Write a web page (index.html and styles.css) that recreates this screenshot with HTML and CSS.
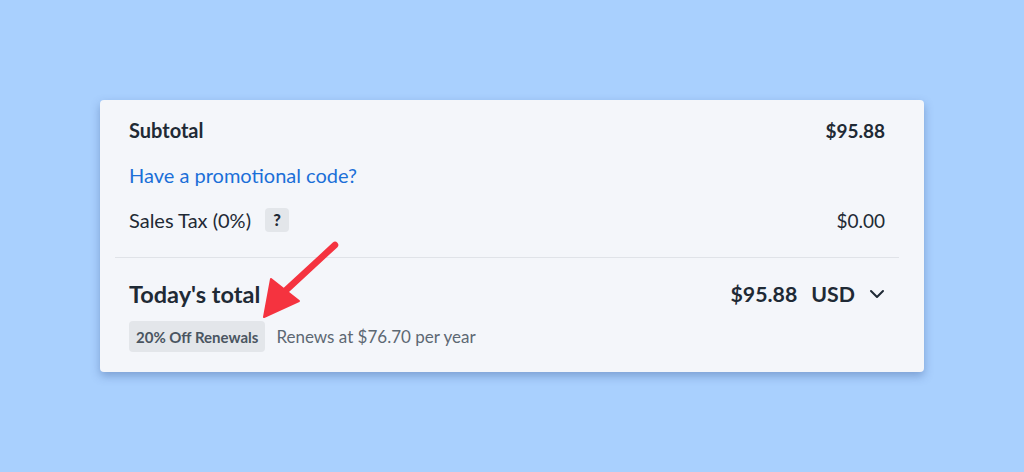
FILE: index.html
```html
<!DOCTYPE html>
<html lang="en">
  <head>
    <meta charset="UTF-8" />
    <meta name="viewport" content="width=device-width, initial-scale=1.0" />
    <link rel="stylesheet" href="styles.css">
  </head>
  <body>
    <div class="card">
      <div class="row">
        <span class="strong">Subtotal</span>
        <span class="strong amount">$95.88</span>
      </div>
      <div class="row">
        <a class="promo" href="#">Have a promotional code?</a>
      </div>
      <div class="row">
        <span class="tax">Sales Tax (0%) <span class="help">?</span></span>
        <span class="amount">$0.00</span>
      </div>

      <div class="divider"></div>

      <div class="row total-row">
        <span class="total">Today's total</span>
        <span class="total-right">
          <span class="total total-amount">$95.88</span>
          <span class="total total-amount">USD</span>
          <svg class="chev" width="16" height="10" viewBox="0 0 16 10">
            <path d="M2 2 L8 8 L14 2" fill="none" stroke="#1f2a35" stroke-width="2" stroke-linecap="round" stroke-linejoin="round"/>
          </svg>
        </span>
      </div>
      <div class="row renew-row">
        <span class="badge">20% Off Renewals</span>
        <span class="renew">Renews at $76.70 per year</span>
      </div>

      <svg class="arrow" width="90" height="90" viewBox="0 0 90 90">
        <path d="M82 8 L30 56" stroke="#f5333f" stroke-width="6.5" stroke-linecap="round"/>
        <polygon points="11,80 18,42 46,64" fill="#f5333f" stroke="#f5333f" stroke-width="2" stroke-linejoin="round"/>
      </svg>
    </div>
  </body>
</html>
```

FILE: styles.css
```css
body {
  margin: 0;
  height: 472px;
  background-color: #a9d0fe;
  font-family: "Lato", "Noto Sans", sans-serif;
  color: #1f2a35;
  position: relative;
}
.card {
  position: absolute;
  left: 100px;
  top: 100px;
  width: 824px;
  height: 272px;
  box-sizing: border-box;
  padding: 15px 25px 0 15px;
  background-color: #f4f6fa;
  border-radius: 4px;
  box-shadow: 0 4px 10px rgba(40, 70, 130, 0.35);
  display: flex;
  flex-direction: column;
  gap: 15px;
}
.row {
  display: flex;
  justify-content: space-between;
  align-items: center;
  height: 30px;
  padding: 0 14px;
  font-size: 20px;
}
.strong {
  font-weight: 700;
}
.amount {
  font-size: 19px;
}
.promo {
  color: #1b6fd8;
  text-decoration: none;
}
.tax {
  display: flex;
  align-items: center;
  gap: 14px;
}
.help {
  display: inline-flex;
  align-items: center;
  justify-content: center;
  width: 24px;
  height: 24px;
  border-radius: 4px;
  background-color: #e3e6ea;
  font-size: 16.5px;
  font-weight: 900;
}
.divider {
  height: 1px;
  background-color: #e0e3e8;
  margin-top: 7px;
}
.total-row {
  height: 30px;
  margin-top: 6px;
}
.total {
  font-size: 23.5px;
  font-weight: 700;
}
.total-amount {
  font-size: 21.3px;
}
.total-right {
  display: flex;
  align-items: center;
  gap: 14px;
}
.renew-row {
  justify-content: flex-start;
  gap: 11px;
  height: 31px;
  margin-top: -3px;
}
.badge {
  display: inline-flex;
  align-items: center;
  height: 31px;
  padding: 0 7px;
  border-radius: 4px;
  background-color: #e3e6ea;
  color: #4a5561;
  font-size: 15px;
  font-weight: 700;
}
.renew {
  color: #5d6873;
  font-size: 17px;
}
.arrow {
  position: absolute;
  left: 153px;
  top: 137px;
}
```
